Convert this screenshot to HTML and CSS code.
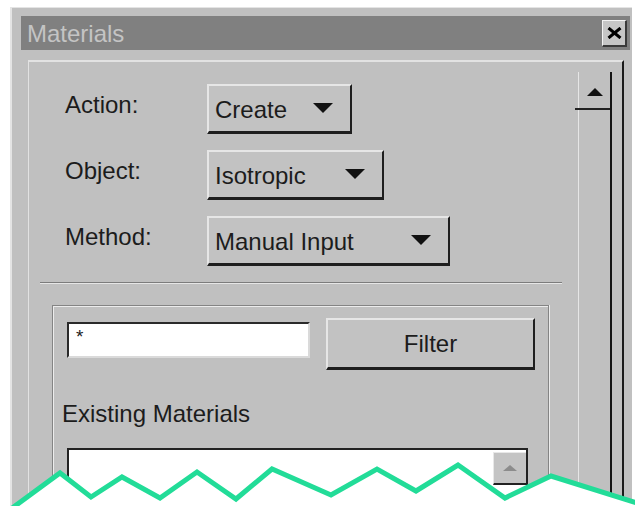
FILE: index.html
```html
<!DOCTYPE html>
<html lang="en">
<head>
<meta charset="utf-8">
<title>Materials</title>
<link rel="stylesheet" href="styles.css">
</head>
<body>
<div class="window">
  <div class="titlebar">
    <span class="title">Materials</span>
    <div class="close">
      <svg width="15" height="12" viewBox="0 0 15 12"><path d="M1.5 1 L13.5 11 M13.5 1 L1.5 11" stroke="#000" stroke-width="3" fill="none"/></svg>
    </div>
  </div>
  <div class="client">
    <div class="content">
      <div class="form">
        <div class="row">
          <span class="label">Action:</span>
          <div class="dropdown dd-action"><span>Create</span><i class="arrow"></i></div>
        </div>
        <div class="row">
          <span class="label">Object:</span>
          <div class="dropdown dd-object"><span>Isotropic</span><i class="arrow"></i></div>
        </div>
        <div class="row">
          <span class="label">Method:</span>
          <div class="dropdown dd-method"><span>Manual Input</span><i class="arrow"></i></div>
        </div>
      </div>
      <div class="separator"></div>
      <div class="group">
        <div class="filter-row">
          <div class="textfield">*</div>
          <div class="button">Filter</div>
        </div>
        <div class="caption">Existing Materials</div>
        <div class="listbox">
          <div class="list-scroll">
            <div class="list-up"><i class="arrow-up disabled"></i></div>
          </div>
        </div>
      </div>
    </div>
    <div class="vscroll">
      <div class="up-btn"><i class="arrow-up"></i></div>
    </div>
  </div>
</div>
<svg class="tear" width="635" height="506" viewBox="0 0 635 506">
  <polygon fill="#fff" points="0,517 60,473 91,497 122,477 160,498 197,472 236,499 272,469 331,495 377,469 416,491 458,465 505,498 551,476 640,504 640,506 0,506"/>
  <polyline fill="none" stroke="#22dc98" stroke-width="5" stroke-linejoin="miter" points="0,517 60,473 91,497 122,477 160,498 197,472 236,499 272,469 331,495 377,469 416,491 458,465 505,498 551,476 640,504"/>
</svg>
</body>
</html>
```

FILE: styles.css
```css
html, body {
  margin: 0;
  padding: 0;
  background: #fff;
}

body {
  position: relative;
  width: 635px;
  height: 506px;
  overflow: hidden;
  font-family: "Liberation Sans", Arial, sans-serif;
  font-size: 24px;
  color: #1c1c1c;
}

/* outer window frame */
.window {
  box-sizing: border-box;
  margin: 7px 0 0 10px;
  width: 622px;
  height: 499px;
  padding: 8px 2px 0 9px;
  background: #c0c0c0;
  border-top: 1px solid #e4e4e4;
  border-left: 2px solid #e4e4e4;
  display: flex;
  flex-direction: column;
  overflow: hidden;
}

.titlebar {
  height: 34px;
  background: #808080;
  display: flex;
  align-items: center;
  justify-content: space-between;
  padding-right: 3px;
  flex: none;
}

.title {
  padding: 2px 0 0 6px;
  color: #c4c4c4;
  line-height: 28px;
}

.close {
  box-sizing: border-box;
  width: 25px;
  height: 27px;
  background: #c6c6c6;
  border-top: 1px solid #f4f4f4;
  border-left: 1px solid #f4f4f4;
  border-right: 2px solid #3a3a3a;
  border-bottom: 2px solid #3a3a3a;
  display: flex;
  align-items: center;
  justify-content: center;
}

/* raised client panel */
.client {
  flex: 1;
  min-height: 0;
  margin: 10px 0 0 7px;
  width: 596px;
  box-sizing: border-box;
  border-top: 2px solid #e2e2e2;
  border-left: 1px solid #e2e2e2;
  border-right: 2px solid #1a1a1a;
  padding-right: 10px;
  display: flex;
}

.content {
  flex: 1;
  padding-top: 22px;
}

.form {
  display: flex;
  flex-direction: column;
  gap: 16px;
}

.row {
  display: flex;
  align-items: center;
  height: 50px;
}

.label {
  width: 142px;
  padding-left: 36px;
  margin-bottom: 9px;
  line-height: 28px;
}

.dropdown {
  box-sizing: border-box;
  height: 50px;
  display: flex;
  align-items: center;
  justify-content: space-between;
  padding: 2px 17px 0 6px;
  background: #c2c2c2;
  border-top: 2px solid #e6e6e6;
  border-left: 2px solid #e6e6e6;
  border-right: 2px solid #1e1e1e;
  border-bottom: 3px solid #1e1e1e;
}

.dd-action { width: 145px; }
.dd-object { width: 177px; }
.dd-method { width: 243px; }

.arrow {
  width: 0;
  height: 0;
  border-left: 10px solid transparent;
  border-right: 10px solid transparent;
  border-top: 10px solid #111;
  margin-top: -3px;
}

.separator {
  margin: 16px 0 0 11px;
  width: 522px;
  height: 1px;
  background: #7c7c7c;
  border-bottom: 1px solid #e6e6e6;
}

/* etched group box */
.group {
  margin: 21px 0 0 23px;
  width: 497px;
  height: 196px;
  border: 1px solid #848484;
  border-bottom: none;
  box-shadow: inset 1px 1px 0 #ececec, 1px 0 0 #ececec;
  padding: 12px 0 0 14px;
  box-sizing: border-box;
}

.filter-row {
  display: flex;
  align-items: flex-start;
}

.textfield {
  box-sizing: border-box;
  margin-top: 4px;
  width: 243px;
  height: 36px;
  background: #fff;
  border-top: 2px solid #2a2a2a;
  border-left: 2px solid #2a2a2a;
  border-right: 2px solid #dadada;
  border-bottom: 2px solid #dadada;
  padding: 3px 0 0 7px;
  font-size: 19px;
  line-height: 20px;
}

.button {
  box-sizing: border-box;
  margin-left: 16px;
  width: 209px;
  height: 52px;
  background: #c2c2c2;
  border-top: 2px solid #e6e6e6;
  border-left: 2px solid #e6e6e6;
  border-right: 2px solid #1e1e1e;
  border-bottom: 3px solid #1e1e1e;
  display: flex;
  align-items: center;
  justify-content: center;
  line-height: 28px;
}

.caption {
  margin: 30px 0 0 -5px;
  line-height: 28px;
}

.listbox {
  box-sizing: border-box;
  margin-top: 20px;
  width: 461px;
  height: 48px;
  background: #fff;
  border-top: 2px solid #222;
  border-left: 2px solid #222;
  border-right: 2px solid #222;
  display: flex;
  justify-content: flex-end;
}

.list-scroll {
  width: 33px;
  padding-top: 2px;
}

.list-up {
  box-sizing: border-box;
  height: 33px;
  background: #c4c4c4;
  border-top: 1px solid #e8e8e8;
  border-left: 1px solid #e8e8e8;
  border-bottom: 2px solid #222;
  display: flex;
  align-items: center;
  justify-content: center;
}

/* window scrollbar */
.vscroll {
  box-sizing: border-box;
  width: 34px;
  margin-top: 10px;
  border-left: 1px solid #e6e6e6;
  border-right: 2px solid #141414;
  padding-top: 3px;
}

.up-btn {
  box-sizing: border-box;
  height: 35px;
  margin-left: -4px;
  padding-left: 4px;
  border-bottom: 2px solid #222;
  display: flex;
  align-items: center;
  justify-content: center;
}

.arrow-up {
  width: 0;
  height: 0;
  border-left: 8px solid transparent;
  border-right: 8px solid transparent;
  border-bottom: 8px solid #111;
}

.arrow-up.disabled {
  border-left-width: 7px;
  border-right-width: 7px;
  border-bottom: 6px solid #8c8c8c;
}

/* torn edge over the lower part */
.tear {
  position: absolute;
  left: 0;
  top: 0;
  pointer-events: none;
}
```
